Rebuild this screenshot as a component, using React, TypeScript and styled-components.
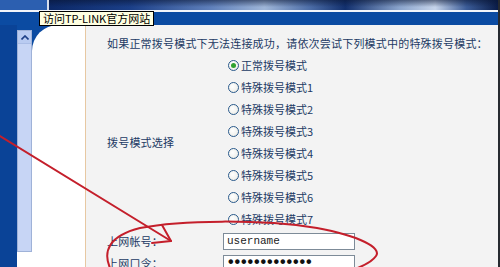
import React from "react";
import styled, { createGlobalStyle } from "styled-components";

const Global = createGlobalStyle`
  html, body { margin: 0; padding: 0; background: #f3f3f3; }
  body {
    width: 500px;
    height: 267px;
    overflow: hidden;
    font-family: "Noto Sans CJK SC", "Noto Sans", sans-serif;
  }
`;

const Page = styled.div`
  position: relative;
  width: 500px;
  height: 267px;
  box-sizing: border-box;
  overflow: hidden;
  display: flex;
  flex-direction: column;
  background: #0b4ba2;
  border-right: 2px solid #262a30;
`;

const Banner = styled.div`
  height: 10px;
  display: flex;
`;

const BannerLeft = styled.div`
  width: 47px;
  background: #2c5fb0;
`;

const BannerSep = styled.div`
  width: 2px;
  background: #d6deec;
`;

const BannerArt = styled.div`
  flex: 1;
  background:
    linear-gradient(180deg, rgba(8, 20, 50, 0.55) 0%, rgba(8, 20, 50, 0) 70%),
    linear-gradient(90deg, #0c2866 0%, #1b3f88 18%, #5f80bb 36%, #9fb6d8 48%, #4d6ea8 58%, #12306e 66%, #8aa4cc 78%, #c6d4ea 86%, #3b5c98 93%, #0a1c48 100%);
`;

const WhiteRule = styled.div`
  height: 2px;
  background: #f2f5fa;
`;

const HeaderBand = styled.div`
  height: 13px;
  background: #0b4ba2;
`;

const Main = styled.div`
  flex: 1;
  min-height: 0;
  display: flex;
`;

const Rail = styled.div`
  width: 17px;
  background: #0a4397;
`;

const ScrollCol = styled.div`
  width: 15px;
  display: flex;
  flex-direction: column;
  background: #ffffff;
`;

const ScrollCap = styled.div`
  height: 5px;
  background: #0b4ba2;
`;

const ScrollTrack = styled.div`
  height: 222px;
  box-sizing: border-box;
  border: 1px solid #9fb2d8;
  background: #c7d5f5;
  display: flex;
  flex-direction: column;
`;

const ScrollButton = styled.div`
  height: 12px;
  display: flex;
  align-items: center;
  justify-content: center;
  background: #b9cbf1;
  border-bottom: 1px solid #aabde6;
`;

const WhitePanel = styled.div`
  width: 53px;
  background: #ffffff;
  border-top-left-radius: 26px;
`;

const OrangeLine = styled.div`
  width: 1px;
  background: #e7c8a2;
`;

const Content = styled.div`
  flex: 1;
  background: #f3f3f3;
  padding: 10px 0 0 21px;
  color: #223a64;
  font-size: 11px;
`;

const Intro = styled.div`
  line-height: 16px;
  letter-spacing: 0.2px;
  white-space: nowrap;
  margin-bottom: 3px;
`;

const Form = styled.div`
  display: grid;
  grid-template-columns: 116px 1fr;
`;

const Label = styled.div`
  align-self: center;
  letter-spacing: 0.2px;
  white-space: nowrap;
`;

const RadioList = styled.div`
  display: flex;
  flex-direction: column;
  padding-left: 5px;
`;

const RadioRow = styled.div`
  height: 22px;
  display: flex;
  align-items: center;
  gap: 2px;
  white-space: nowrap;
`;

const RadioDot = styled.span<{ $checked?: boolean }>`
  width: 11px;
  height: 11px;
  box-sizing: border-box;
  border-radius: 50%;
  border: 1px solid #2a5a8c;
  background: radial-gradient(circle at 40% 40%, #ffffff 0%, #f2f2ee 60%, #dcdcd4 100%);
  display: flex;
  align-items: center;
  justify-content: center;
  &::after {
    content: "";
    width: 5px;
    height: 5px;
    border-radius: 50%;
    background: ${(p) => (p.$checked ? "#2fa12f" : "transparent")};
  }
`;

const FieldRow = styled.div`
  height: 22px;
  display: flex;
  align-items: center;
`;

const TextBox = styled.input`
  width: 132px;
  height: 17px;
  box-sizing: border-box;
  border: 1px solid #7d8b98;
  background: #ffffff;
  padding: 0 3px;
  margin: 0;
  font: 11px "Liberation Mono", monospace;
  color: #222222;
  outline: none;
`;

const PasswordBox = styled(TextBox)`
  font: bold 16px "Liberation Mono", monospace;
  letter-spacing: -3.1px;
  padding: 0 2px;
  color: #111111;
`;

const Tooltip = styled.div`
  position: absolute;
  left: 39px;
  top: 11px;
  height: 15px;
  box-sizing: border-box;
  padding: 0 3px;
  background: #ffffe1;
  border: 1px solid #000000;
  color: #000000;
  font-size: 11px;
  line-height: 13px;
  white-space: nowrap;
`;

const Annotation = styled.svg`
  position: absolute;
  left: 0;
  top: 0;
  pointer-events: none;
`;

const modes = [
  "正常拨号模式",
  "特殊拨号模式1",
  "特殊拨号模式2",
  "特殊拨号模式3",
  "特殊拨号模式4",
  "特殊拨号模式5",
  "特殊拨号模式6",
  "特殊拨号模式7",
];

export default function App() {
  return (
    <>
      <Global />
      <Page>
        <Banner>
          <BannerLeft />
          <BannerSep />
          <BannerArt />
        </Banner>
        <WhiteRule />
        <HeaderBand />
        <Main>
          <Rail />
          <ScrollCol>
            <ScrollCap />
            <ScrollTrack>
              <ScrollButton>
                <svg width="8" height="5" viewBox="0 0 8 5">
                  <path d="M0.5 4.5 L4 1 L7.5 4.5" fill="none" stroke="#1d3f86" strokeWidth="1.6" />
                </svg>
              </ScrollButton>
            </ScrollTrack>
          </ScrollCol>
          <WhitePanel />
          <OrangeLine />
          <Content>
            <Intro>如果正常拨号模式下无法连接成功，请依次尝试下列模式中的特殊拨号模式：</Intro>
            <Form>
              <Label>拨号模式选择</Label>
              <RadioList>
                {modes.map((m, i) => (
                  <RadioRow key={m}>
                    <RadioDot $checked={i === 0} />
                    <span>{m}</span>
                  </RadioRow>
                ))}
              </RadioList>
              <Label>上网帐号：</Label>
              <FieldRow>
                <TextBox readOnly value="username" />
              </FieldRow>
              <Label>上网口令：</Label>
              <FieldRow>
                <PasswordBox readOnly type="password" value="abcdefghijklm" />
              </FieldRow>
            </Form>
          </Content>
        </Main>
        <Tooltip>访问TP-LINK官方网站</Tooltip>
        <Annotation width="500" height="267" viewBox="0 0 500 267">
          <g fill="none" stroke="#c41f2b" strokeWidth="2" strokeLinecap="round" strokeLinejoin="round">
            <path d="M0 136 L171 241" />
            <path d="M152 243 L171 241 L162 225" />
            <path d="M110 268 C103 252 108 236 140 228 C180 220 260 219 317 228 C360 236 382 248 376 256 C372 262 363 266 355 269" />
          </g>
        </Annotation>
      </Page>
    </>
  );
}
